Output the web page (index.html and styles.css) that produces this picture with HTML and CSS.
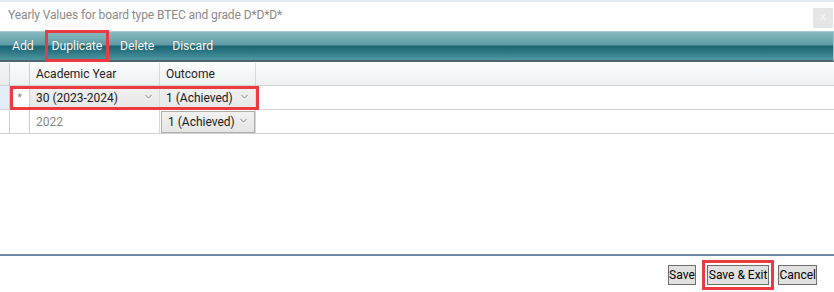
FILE: index.html
```html
<!DOCTYPE html>
<html>
<head>
<meta charset="utf-8">
<link rel="stylesheet" href="styles.css">
</head>
<body>
<div class="dialog">
  <div class="titlebar">
    <span class="title">Yearly Values for board type BTEC and grade D*D*D*</span>
    <span class="close">x</span>
  </div>
  <div class="toolbar">
    <span class="tool">Add</span>
    <span class="tool marked">Duplicate</span>
    <span class="tool">Delete</span>
    <span class="tool">Discard</span>
  </div>
  <div class="grid">
    <div class="c h edge"></div>
    <div class="c h sel"></div>
    <div class="c h">Academic Year</div>
    <div class="c h">Outcome</div>
    <div class="c h fill"></div>

    <div class="c edge cur"></div>
    <div class="c sel star">*</div>
    <div class="c"><div class="combo flat">30 (2023-2024)<svg class="chev" width="7" height="5" viewBox="0 0 7 5"><polyline points="0.5,1 3.5,4 6.5,1" fill="none" stroke="#888" stroke-width="1"/></svg></div></div>
    <div class="c"><div class="combo flat">1 (Achieved)<svg class="chev" width="7" height="5" viewBox="0 0 7 5"><polyline points="0.5,1 3.5,4 6.5,1" fill="none" stroke="#888" stroke-width="1"/></svg></div></div>
    <div class="c fill"></div>

    <div class="c edge"></div>
    <div class="c sel"></div>
    <div class="c year">2022</div>
    <div class="c"><div class="combo boxed">1 (Achieved)<svg class="chev" width="7" height="5" viewBox="0 0 7 5"><polyline points="0.5,1 3.5,4 6.5,1" fill="none" stroke="#888" stroke-width="1"/></svg></div></div>
    <div class="c fill"></div>

    <div class="rowmark"></div>
  </div>
  <div class="spacer"></div>
  <div class="footer">
    <button class="btn">Save</button>
    <button class="btn marked-btn">Save &amp; Exit</button>
    <button class="btn last">Cancel</button>
  </div>
</div>
</body>
</html>
```
FILE: styles.css
```css
* { box-sizing: border-box; }
html, body { margin: 0; padding: 0; background: #fff; }
body {
  font-family: Roboto, "Noto Sans", sans-serif;
  font-size: 12px;
  width: 834px;
  height: 292px;
  overflow: hidden;
}
.dialog {
  height: 292px;
  display: flex;
  flex-direction: column;
}
.titlebar {
  height: 31px;
  border-top: 2px solid #e2ebf4;
  display: flex;
  align-items: flex-start;
  justify-content: space-between;
}
.title {
  color: #8a8a8a;
  padding: 5px 0 0 8px;
  font-size: 12px;
  letter-spacing: -0.1px;
  line-height: 16px;
}
.close {
  width: 20px;
  height: 20px;
  margin-top: 6px;
  margin-right: 1px;
  background: #e5e5e5;
  color: #f6f6f6;
  font-size: 11px;
  line-height: 18px;
  text-align: center;
}
.toolbar {
  height: 31px;
  display: flex;
  align-items: center;
  padding-left: 7px;
  gap: 8px;
  border-top: 1px solid #a9cdd2;
  border-right: 1px solid #9cc6cb;
  border-bottom: 2px solid #4b676d;
  background: linear-gradient(to bottom,
    #86bac0 0px, #6fa8b0 8px, #5c9aa4 13px,
    #1c6573 14px, #2d7885 20px, #4f98a1 28px);
}
.tool {
  color: #fff;
  font-size: 12.3px;
  padding: 4px 5px;
  line-height: 18px;
  letter-spacing: -0.1px;
  text-shadow: 0 0 1px rgba(0,0,0,0.35);
}
.tool.marked {
  outline: 3px solid #ec3b40;
  outline-offset: -1px;
  padding: 5px 5px;
}
.grid {
  position: relative;
  margin-top: 1px;
  display: grid;
  grid-template-columns: 10px 20px 130px 96px 1fr;
  grid-template-rows: 23px 24px 24px;
}
.c {
  border-right: 1px solid #d9d9d9;
  border-bottom: 1px solid #d4d4d4;
  color: #222;
  font-size: 12px;
  display: flex;
  align-items: center;
  padding-left: 6px;
  white-space: nowrap;
}
.c.h {
  background: linear-gradient(to bottom, #fbfbfc, #eef0f2);
  border-bottom: 1px solid #d0d3d6;
}
.c.edge { padding: 0; border-right: 1px solid #cfcfcf; }
.c.h.edge { background: linear-gradient(to bottom, #f4f5f6, #e9ebed); }
.c.edge.cur { background: #e3eef8; }
.c.sel { padding: 0; justify-content: center; border-right: 1px solid #d0d0d0; }
.c.star { color: #8a8a8a; font-size: 11px; }
.c.fill { border-right: none; }
.c.year { color: #8a8a8a; }
.c:has(.combo) { padding: 0; }
.combo {
  position: relative;
  height: 100%;
  width: 100%;
  display: flex;
  align-items: center;
  padding-left: 6px;
  color: #1a1a1a;
}
.combo.flat {
  background: linear-gradient(to bottom, #f2f2f2, #e6e6e6);
}
.combo.boxed {
  width: 94px;
  height: 22px;
  margin-left: 1px;
  border: 1px solid #acacac;
  background: linear-gradient(to bottom, #f2f2f2, #e5e5e5);
}
.chev {
  position: absolute;
  right: 7px;
  top: 50%;
  margin-top: -4px;
}
.rowmark {
  position: absolute;
  left: 10px;
  top: 23px;
  width: 249px;
  height: 24px;
  border: 3px solid #ec3b40;
  pointer-events: none;
}
.spacer { flex: 1; }
.footer {
  height: 38px;
  border-top: 2px solid #7189a6;
  display: flex;
  justify-content: flex-end;
  align-items: flex-start;
  padding: 9px 17px 0 0;
}
.btn {
  font-family: Roboto, "Noto Sans", sans-serif;
  font-size: 12px;
  height: 20px;
  line-height: 16px;
  padding: 0;
  margin: 0;
  background: #e1e1e1;
  border: 1px solid #6e6e6e;
  color: #000;
  border-radius: 0;
}
.btn.marked-btn {
  outline: 3px solid #ec3b40;
  outline-offset: 2px;
  margin-left: 11px;
  margin-right: 9px;
  padding: 0 1px;
}
```
